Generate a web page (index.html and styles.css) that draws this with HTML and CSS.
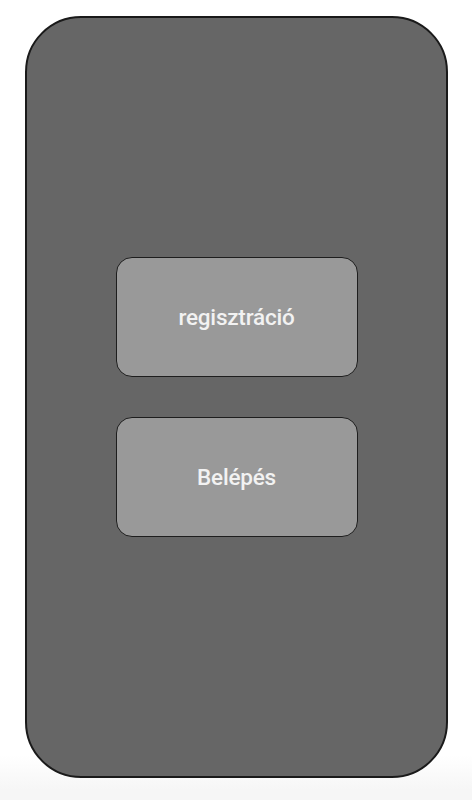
FILE: index.html
```html
<!DOCTYPE html>
<html lang="hu">
<head>
<meta charset="utf-8">
<link rel="stylesheet" href="styles.css">
</head>
<body>
<div class="phone">
  <button class="btn">regisztráció</button>
  <button class="btn">Belépés</button>
</div>
</body>
</html>
```
FILE: styles.css
```css
html, body {
  margin: 0;
  padding: 0;
}
body {
  width: 472px;
  height: 800px;
  background: linear-gradient(to bottom, #ffffff 0, #ffffff 755px, #f6f6f6 790px, #f6f6f6 800px);
  padding-top: 16px;
  padding-left: 25px;
  box-sizing: border-box;
}
.phone {
  box-sizing: border-box;
  width: 423px;
  height: 762px;
  background: #666666;
  border: 2px solid #1a1a1a;
  border-radius: 56px;
  display: flex;
  flex-direction: column;
  align-items: center;
  justify-content: center;
  gap: 40px;
}
.btn {
  box-sizing: border-box;
  width: 242px;
  height: 120px;
  background: #999999;
  border: 1.5px solid #1e1e1e;
  border-radius: 16px;
  color: #f2f2f2;
  font-family: Roboto, "Liberation Sans", sans-serif;
  font-weight: 500;
  font-size: 22.5px;
  letter-spacing: -0.2px;
  padding: 0;
}
```
